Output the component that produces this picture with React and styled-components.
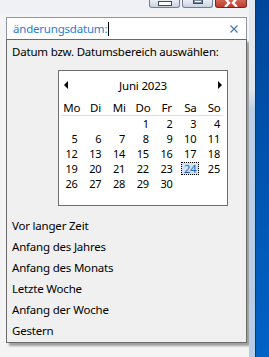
import React from 'react';
import styled, { createGlobalStyle } from 'styled-components';

const GlobalStyle = createGlobalStyle`
  html, body {
    margin: 0;
    padding: 0;
    background: #f4f4f4;
  }
  body {
    font-family: "Noto Sans", "Liberation Sans", sans-serif;
    font-size: 11.5px;
    letter-spacing: -0.2px;
    color: #000;
  }
`;

const Screen = styled.div`
  display: flex;
  width: 269px;
  height: 357px;
  overflow: hidden;
`;

const Content = styled.div`
  width: 249px;
  padding: 0 2px 0 6px;
  box-sizing: border-box;
  display: flex;
  flex-direction: column;
  background: linear-gradient(#eff1f4 0, #eff1f4 14px, #f4f4f4 14px);
`;

const Frame = styled.div`
  width: 6px;
  background: linear-gradient(#e4e9ef 0, #dfe6ee 90px, #b9d0e8 110px, #b4cde6 100%);
`;

const FrameEdge = styled.div`
  width: 1px;
  background: #1e3550;
`;

const Desktop = styled.div`
  flex: 1;
  background: linear-gradient(#00479b, #0062c6);
`;

const TitleBar = styled.div`
  height: 17px;
  display: flex;
  justify-content: flex-end;
  align-items: flex-start;
  gap: 2px;
`;

const WinButton = styled.div`
  width: ${p => p.$w}px;
  height: 8px;
  box-sizing: border-box;
  border: 1px solid ${p => (p.$close ? '#6e2a22' : '#6f8096')};
  border-top: none;
  border-radius: 0 0 3px 3px;
  background: ${p => (p.$close
    ? 'linear-gradient(#d0665a, #c13c2c)'
    : 'linear-gradient(#e9eef4, #c9d4e1)')};
  display: flex;
  justify-content: center;
  overflow: hidden;
`;

const MinGlyph = styled.div`
  width: 12px;
  height: 3px;
  margin-top: 1px;
  background: #fff;
  border: 1px solid #3c4a5c;
`;

const MaxGlyph = styled.div`
  width: 8px;
  height: 3px;
  background: #fff;
  border: 1px solid #3c4a5c;
  border-top: none;
  box-shadow: inset 0 0 0 1px #7f8fa3;
`;

const CloseGlyph = styled.svg`
  display: block;
`;

const SearchBox = styled.div`
  height: 22px;
  box-sizing: border-box;
  border: 1px solid #8d96a3;
  border-bottom: none;
  background: #fff;
  display: flex;
  align-items: center;
  padding: 0 8px 0 6px;
`;

const SearchText = styled.span`
  color: #2b7bd3;
`;

const Caret = styled.span`
  display: inline-block;
  width: 1px;
  height: 14px;
  margin-left: 1px;
  background: #000;
`;

const ClearIcon = styled.svg`
  margin-left: auto;
`;

const Panel = styled.div`
  border: 1px solid #6a6a6a;
  background: #f0f0f0;
  box-shadow: 3px 3px 2px rgba(0, 0, 0, 0.35);
  padding: 4px 5px 1px;
  display: flex;
  flex-direction: column;
`;

const Caption = styled.div`
  line-height: 16px;
`;

const Calendar = styled.div`
  width: 170px;
  height: 136px;
  box-sizing: border-box;
  margin: 10px 0 0 46px;
  border: 1px solid #6e6e6e;
  background: #fff;
  padding: 0 1px;
`;

const MonthRow = styled.div`
  height: 28px;
  display: flex;
  align-items: center;
  justify-content: space-between;
  padding: 0 4px;
`;

const Arrow = styled.span`
  width: 0;
  height: 0;
  border-top: 4px solid transparent;
  border-bottom: 4px solid transparent;
  ${p => (p.$dir === 'left'
    ? 'border-right: 4px solid #000;'
    : 'border-left: 4px solid #000;')}
`;

const Grid = styled.div`
  display: grid;
  grid-template-columns: repeat(7, 1fr);
  grid-auto-rows: ${p => p.$row}px;
`;

const DayName = styled.div`
  display: flex;
  align-items: center;
  justify-content: center;
`;

const Rule = styled.div`
  height: 1px;
  margin: 0 3px 0 1px;
  background: #dcdcdc;
`;

const DayCell = styled.div`
  display: flex;
  align-items: center;
  justify-content: flex-end;
  padding-right: 3px;
  font-size: 11px;
`;

const DayNum = styled.span`
  line-height: 11px;
  padding: 0 2px;
  border: 1px ${p => (p.$selected ? 'dotted #000' : 'solid transparent')};
  background: ${p => (p.$selected ? '#cce4f7' : 'transparent')};
  color: ${p => (p.$selected ? '#1766c8' : '#000')};
`;

const Shortcuts = styled.div`
  margin-top: 9px;
  display: flex;
  flex-direction: column;
`;

const Shortcut = styled.div`
  height: 21px;
  line-height: 21px;
`;

const dayNames = ['Mo', 'Di', 'Mi', 'Do', 'Fr', 'Sa', 'So'];
const days = [null, null, null, ...Array.from({ length: 30 }, (_, i) => i + 1)];
const shortcuts = [
  'Vor langer Zeit',
  'Anfang des Jahres',
  'Anfang des Monats',
  'Letzte Woche',
  'Anfang der Woche',
  'Gestern',
];

export default function App() {
  return (
    <Screen>
      <GlobalStyle />
      <Content>
        <TitleBar>
          <WinButton $w={31}><MinGlyph /></WinButton>
          <WinButton $w={31}><MaxGlyph /></WinButton>
          <WinButton $w={32} $close>
            <CloseGlyph width="14" height="7" viewBox="0 0 14 7">
              <path d="M1 -2 L5 3 L1 7 M13 -2 L9 3 L13 7" stroke="#fff" strokeWidth="2.4" fill="none" />
            </CloseGlyph>
          </WinButton>
        </TitleBar>
        <SearchBox>
          <SearchText>änderungsdatum:</SearchText>
          <Caret />
          <ClearIcon width="8" height="8" viewBox="0 0 8 8">
            <path d="M0.5 0.5 L7.5 7.5 M7.5 0.5 L0.5 7.5" stroke="#4d78a6" strokeWidth="1.2" />
          </ClearIcon>
        </SearchBox>
        <Panel>
          <Caption>Datum bzw. Datumsbereich auswählen:</Caption>
          <Calendar>
            <MonthRow>
              <Arrow $dir="left" />
              <span>Juni 2023</span>
              <Arrow $dir="right" />
            </MonthRow>
            <Grid $row={16}>
              {dayNames.map(d => <DayName key={d}>{d}</DayName>)}
            </Grid>
            <Rule />
            <Grid $row={15}>
              {days.map((d, i) => (
                <DayCell key={i}>
                  {d && <DayNum $selected={d === 24}>{d}</DayNum>}
                </DayCell>
              ))}
            </Grid>
          </Calendar>
          <Shortcuts>
            {shortcuts.map(s => <Shortcut key={s}>{s}</Shortcut>)}
          </Shortcuts>
        </Panel>
      </Content>
      <Frame />
      <FrameEdge />
      <Desktop />
    </Screen>
  );
}
